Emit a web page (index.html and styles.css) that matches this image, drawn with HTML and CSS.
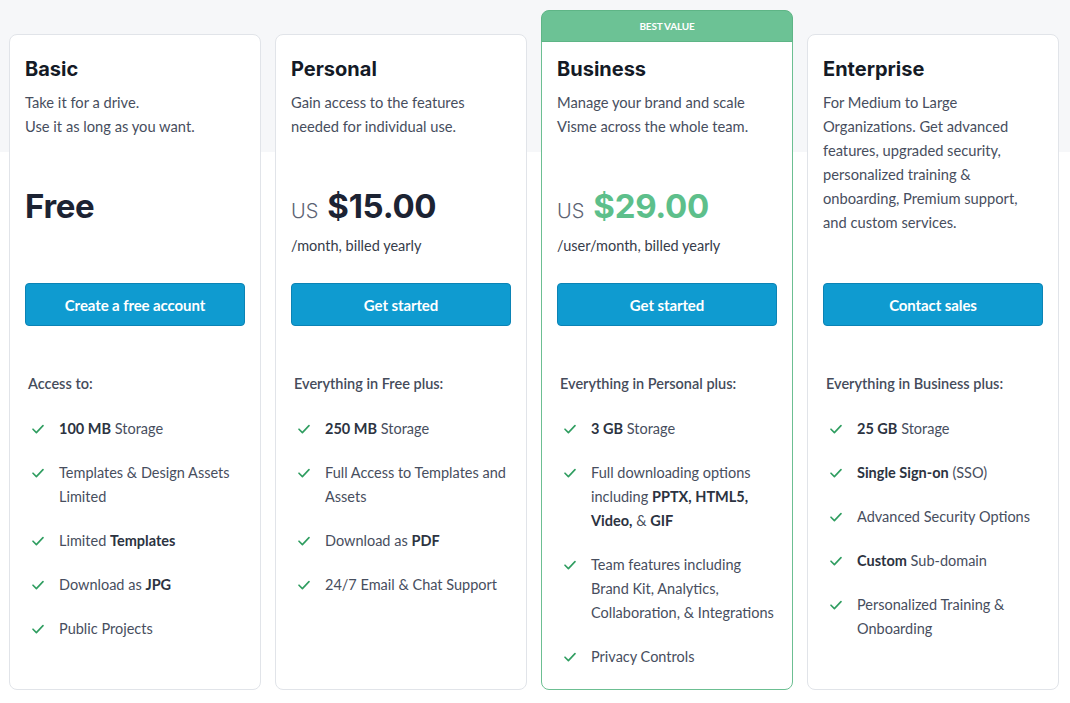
FILE: index.html
```html
<!DOCTYPE html>
<html lang="en">
<head>
<meta charset="utf-8">
<title>Pricing</title>
<link rel="stylesheet" href="styles.css">
</head>
<body>
<svg width="0" height="0" class="defs">
  <symbol id="chk" viewBox="0 0 12 10"><polyline points="1,5.2 4.4,8.6 11,1.6" fill="none" stroke="#2f9d60" stroke-width="1.6" stroke-linecap="round" stroke-linejoin="round"/></symbol>
</svg>
<main class="plans">
  <section class="card">
    <div class="top">
      <h2 class="name">Basic</h2>
      <p class="desc">Take it for a drive.<br>Use it as long as you want.</p>
      <div class="price"><span class="amount">Free</span></div>
    </div>
    <a class="btn">Create a free account</a>
    <h3 class="incl">Access to:</h3>
    <ul class="feats">
      <li><svg class="ck"><use href="#chk"/></svg><span><b>100 MB</b> Storage</span></li>
      <li><svg class="ck"><use href="#chk"/></svg><span>Templates &amp; Design Assets Limited</span></li>
      <li><svg class="ck"><use href="#chk"/></svg><span>Limited <b>Templates</b></span></li>
      <li><svg class="ck"><use href="#chk"/></svg><span>Download as <b>JPG</b></span></li>
      <li><svg class="ck"><use href="#chk"/></svg><span>Public Projects</span></li>
    </ul>
  </section>
  <section class="card">
    <div class="top">
      <h2 class="name">Personal</h2>
      <p class="desc">Gain access to the features needed for individual use.</p>
      <div class="price"><span class="cur">US</span><span class="amount">$15.00</span></div>
      <p class="period">/month, billed yearly</p>
    </div>
    <a class="btn">Get started</a>
    <h3 class="incl">Everything in Free plus:</h3>
    <ul class="feats">
      <li><svg class="ck"><use href="#chk"/></svg><span><b>250 MB</b> Storage</span></li>
      <li><svg class="ck"><use href="#chk"/></svg><span>Full Access to Templates and Assets</span></li>
      <li><svg class="ck"><use href="#chk"/></svg><span>Download as <b>PDF</b></span></li>
      <li><svg class="ck"><use href="#chk"/></svg><span>24/7 Email &amp; Chat Support</span></li>
    </ul>
  </section>
  <section class="card featured">
    <div class="badge">BEST VALUE</div>
    <div class="top">
      <h2 class="name">Business</h2>
      <p class="desc">Manage your brand and scale Visme across the whole team.</p>
      <div class="price"><span class="cur">US</span><span class="amount green">$29.00</span></div>
      <p class="period">/user/month, billed yearly</p>
    </div>
    <a class="btn">Get started</a>
    <h3 class="incl">Everything in Personal plus:</h3>
    <ul class="feats">
      <li><svg class="ck"><use href="#chk"/></svg><span><b>3 GB</b> Storage</span></li>
      <li><svg class="ck"><use href="#chk"/></svg><span>Full downloading options including <b>PPTX, HTML5, Video,</b> &amp; <b>GIF</b></span></li>
      <li><svg class="ck"><use href="#chk"/></svg><span>Team features including Brand Kit, Analytics, Collaboration, &amp; Integrations</span></li>
      <li><svg class="ck"><use href="#chk"/></svg><span>Privacy Controls</span></li>
    </ul>
  </section>
  <section class="card">
    <div class="top">
      <h2 class="name">Enterprise</h2>
      <p class="desc">For Medium to Large Organizations. Get advanced features, upgraded security, personalized training &amp; onboarding, Premium support, and custom services.</p>
    </div>
    <a class="btn">Contact sales</a>
    <h3 class="incl">Everything in Business plus:</h3>
    <ul class="feats">
      <li><svg class="ck"><use href="#chk"/></svg><span><b>25 GB</b> Storage</span></li>
      <li><svg class="ck"><use href="#chk"/></svg><span><b>Single Sign-on</b> (SSO)</span></li>
      <li><svg class="ck"><use href="#chk"/></svg><span>Advanced Security Options</span></li>
      <li><svg class="ck"><use href="#chk"/></svg><span><b>Custom</b> Sub-domain</span></li>
      <li><svg class="ck"><use href="#chk"/></svg><span>Personalized Training &amp; Onboarding</span></li>
    </ul>
  </section>
</main>
</body>
</html>
```
FILE: styles.css
```css
* { box-sizing: border-box; }
html, body { margin: 0; padding: 0; }
body {
  width: 1070px;
  height: 703px;
  overflow: hidden;
  font-family: "Lato", "Liberation Sans", sans-serif;
  background: linear-gradient(to bottom, #f6f7f9 0, #f6f7f9 152px, #ffffff 152px);
  color: #474e5e;
}
.defs { position: absolute; width: 0; height: 0; }
.plans {
  display: flex;
  gap: 14px;
  padding: 34px 0 0 9px;
  height: 690px;
}
.card {
  position: relative;
  width: 252px;
  flex: none;
  background: #fff;
  border: 1px solid #e1e4e9;
  border-radius: 8px;
  padding: 22px 15px 0 15px;
  display: flex;
  flex-direction: column;
}
.card > * { flex: none; }
.card.featured { border-color: #6cbf92; }
.badge {
  position: absolute;
  top: -25px;
  left: -1px;
  right: -1px;
  height: 32px;
  background: #6cc295;
  border: 1px solid #5eb586;
  border-radius: 8px 8px 0 0;
  color: #fff;
  font-family: "Lato", sans-serif;
  font-weight: 700;
  font-size: 10px;
  letter-spacing: -0.2px;
  display: flex;
  align-items: center;
  justify-content: center;
}
.top { height: 226px; }
.name {
  margin: 0;
  font-family: "Inter", "Open Sans", sans-serif;
  font-weight: 700;
  font-size: 20px;
  line-height: 24px;
  color: #141a26;
}
.desc {
  margin: 9px 0 0 0;
  font-size: 14.7px;
  line-height: 24px;
  min-height: 94px;
  color: #474e5e;
}
.price {
  display: flex;
  align-items: baseline;
  gap: 9px;
  height: 44px;
  line-height: 44px;
}
.cur {
  font-family: "Inter", sans-serif;
  font-weight: 300;
  font-size: 20px;
  color: #5c6373;
}
.amount {
  font-family: "Inter", sans-serif;
  font-weight: 700;
  font-size: 33px;
  letter-spacing: -0.3px;
  color: #1c2333;
}
.amount.green { color: #5dbf8b; }
.period {
  margin: 6px 0 0 0;
  font-size: 14.5px;
  line-height: 24px;
  color: #363c4a;
}
.btn {
  display: flex;
  align-items: center;
  justify-content: center;
  height: 43px;
  background: #0f9bd0;
  border: 1px solid #0b83b5;
  border-radius: 4px;
  color: #fff;
  font-weight: 700;
  font-size: 15px;
  letter-spacing: -0.1px;
}
.incl {
  margin: 46px 0 0 3px;
  font-size: 14.5px;
  line-height: 24px;
  font-weight: 600;
  color: #454c5b;
}
.feats {
  list-style: none;
  margin: 21px 0 0 0;
  padding: 0;
  display: flex;
  flex-direction: column;
  gap: 20px;
}
.feats li {
  display: flex;
  align-items: flex-start;
  font-size: 14.5px;
  line-height: 24px;
  color: #474e5e;
}
.ck {
  flex: none;
  width: 12px;
  height: 10px;
  margin: 7px 15px 0 7px;
}
.feats b { font-weight: 700; color: #2c3341; }
```
